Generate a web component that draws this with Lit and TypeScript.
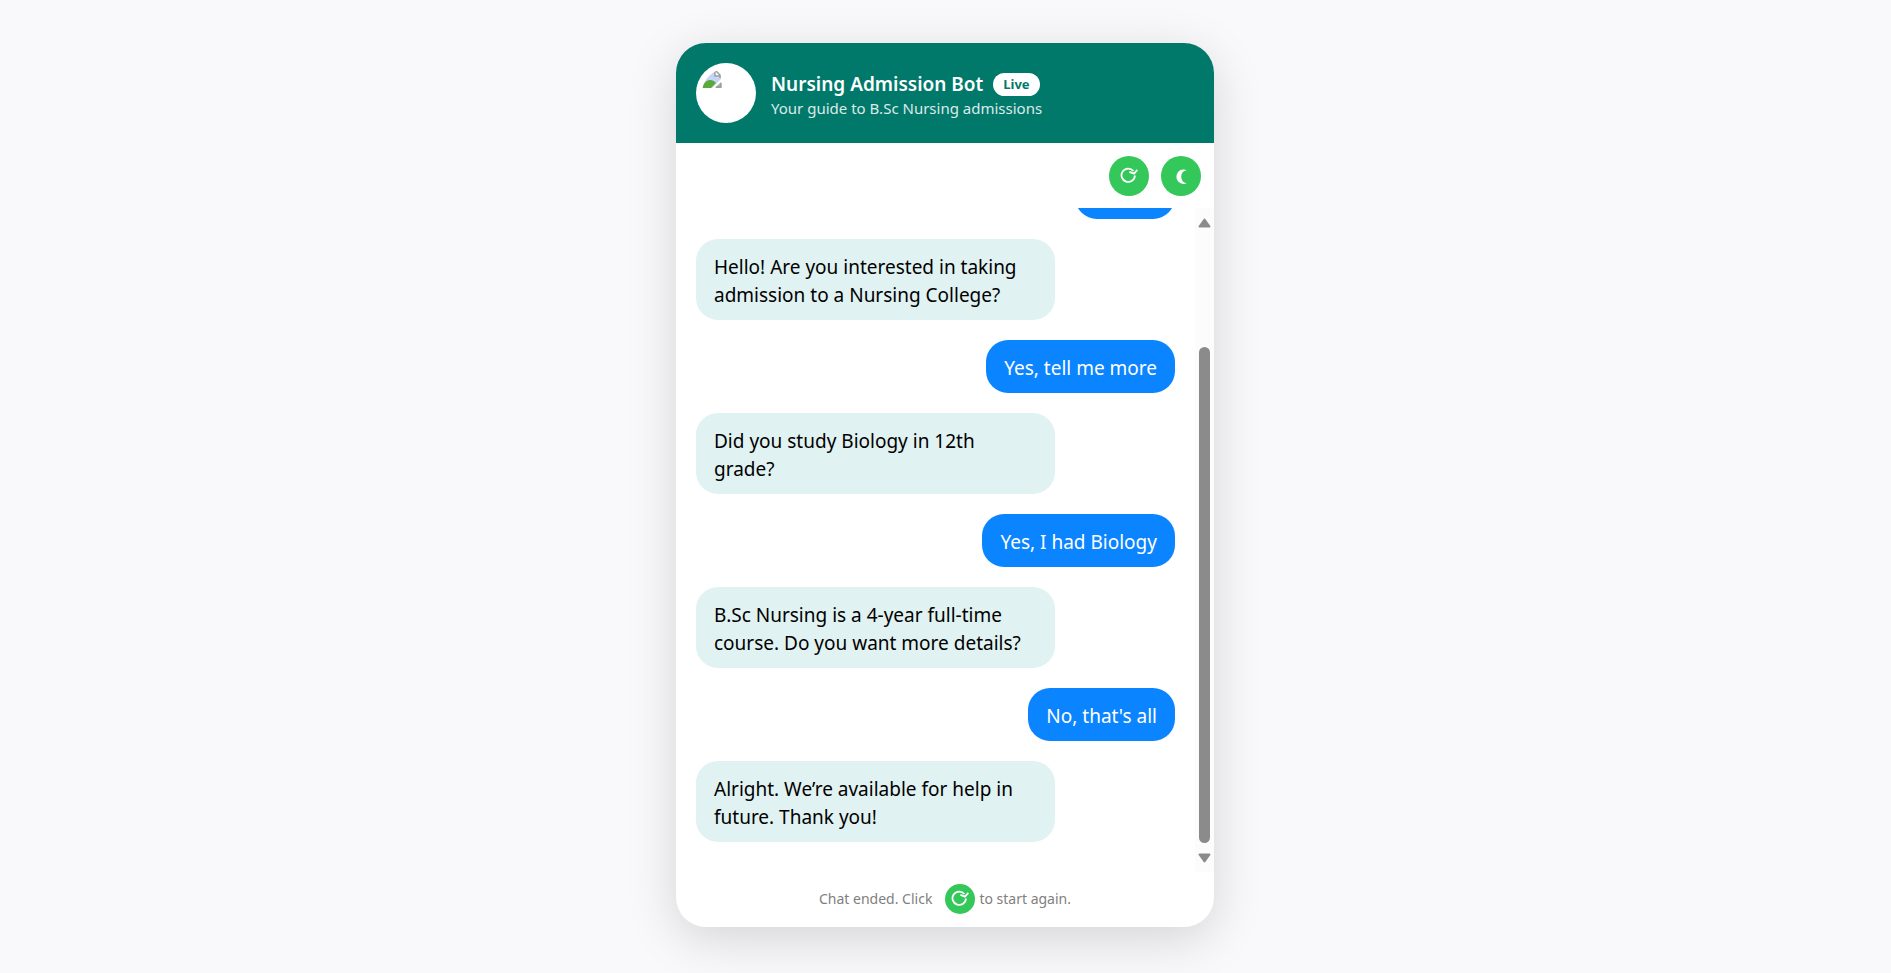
import { LitElement, html, css, svg } from "lit";
import { customElement, property, state } from "lit/decorators.js";

interface Message {
  from: "bot" | "user";
  text: string;
}

const MESSAGES: Message[] = [
  { from: "user", text: "Restart" },
  { from: "bot", text: "Hello! Are you interested in taking admission to a Nursing College?" },
  { from: "user", text: "Yes, tell me more" },
  { from: "bot", text: "Did you study Biology in 12th grade?" },
  { from: "user", text: "Yes, I had Biology" },
  { from: "bot", text: "B.Sc Nursing is a 4-year full-time course. Do you want more details?" },
  { from: "user", text: "No, that's all" },
  { from: "bot", text: "Alright. We\u2019re available for help in future. Thank you!" },
];

const refreshGlyph = svg`
  <path d="M13.4 4A6.7 6.7 0 1 0 14.9 8.4" fill="none" stroke="currentColor" stroke-width="1.8"/>
  <path d="M9.4 4.8 14 6.7 17.4 2.9" fill="none" stroke="currentColor" stroke-width="1.8"/>`;

const moonGlyph = svg`
  <path d="M14.7 3.2A7.2 7.2 0 1 0 14.7 16.2 6.6 6.6 0 0 1 14.7 3.2Z" fill="currentColor"/>`;

@customElement("round-button")
export class RoundButton extends LitElement {
  static styles = css`
    :host { display: inline-flex; }
    .button {
      display: grid;
      place-items: center;
      width: 40px;
      height: 40px;
      padding: 0;
      border: 0;
      border-radius: 50%;
      background: #34c759;
      color: #fff;
      cursor: pointer;
    }
    .small { width: 30px; height: 30px; }
    .icon { display: block; width: 18px; height: 18px; }
  `;

  @property() icon: "refresh" | "moon" = "refresh";
  @property() label = "";
  @property({ type: Boolean }) small = false;

  render() {
    return html`<button class="button ${this.small ? "small" : ""}" type="button" aria-label=${this.label}>
      <svg class="icon" viewBox="0 0 18 18" aria-hidden="true">
        ${this.icon === "moon" ? moonGlyph : refreshGlyph}
      </svg>
    </button>`;
  }
}

@customElement("app-root")
export class AppRoot extends LitElement {
  static styles = css`
    :host {
      display: flex;
      justify-content: center;
      box-sizing: border-box;
      height: 100vh;
      padding: 43px 21px 46px 20px;
      background: #f9f9fb;
      font-family: "Segoe UI", "Noto Sans", sans-serif;
      color: #000;
    }
    .card {
      display: flex;
      flex-direction: column;
      width: 100%;
      max-width: 538px;
      border-radius: 30px;
      overflow: hidden;
      background: #fff;
      box-shadow: 0 12px 50px rgba(0, 0, 0, 0.15);
    }
    .header {
      display: flex;
      align-items: center;
      gap: 15px;
      padding: 20px;
      background: #00796b;
      color: #fff;
    }
    .avatar {
      flex: none;
      box-sizing: border-box;
      width: 60px;
      height: 60px;
      padding: 6px;
      border-radius: 50%;
      background: #fff;
    }
    .broken { display: block; width: 20px; height: 20px; }
    .heading { padding-top: 6px; }
    .title-row { display: flex; align-items: center; gap: 10px; }
    .title { margin: 0; font-size: 19px; line-height: 24px; font-weight: 600; }
    .badge {
      padding: 0 10px;
      border-radius: 12px;
      background: #fff;
      color: #00796b;
      font-size: 13px;
      line-height: 23px;
      font-weight: 700;
    }
    .subtitle { margin: 0; font-size: 15px; line-height: 24px; opacity: 0.85; }
    .toolbar {
      display: flex;
      justify-content: flex-end;
      gap: 12px;
      padding: 13px 13px 12px;
    }
    .chat { display: flex; flex: 1; min-height: 0; }
    .viewport {
      display: flex;
      flex: 1;
      flex-direction: column-reverse;
      overflow-y: auto;
      scrollbar-width: none;
    }
    .messages {
      display: flex;
      flex-direction: column;
      gap: 20px;
      margin: 0;
      padding: 20px 20px 30px;
      list-style: none;
    }
    .message {
      box-sizing: border-box;
      max-width: 75%;
      padding: 14px 18px 11px;
      border-radius: 22px;
      font-size: 19px;
      line-height: 28px;
    }
    .bot { align-self: flex-start; background: #e0f2f1; }
    .user { align-self: flex-end; background: #0a84ff; color: #fff; }
    .rail {
      display: flex;
      flex-direction: column;
      align-items: center;
      gap: 10px;
      box-sizing: border-box;
      width: 19px;
      padding: 9px 3px 8px;
      background: #fcfcfc;
      color: #8b8b8b;
    }
    .arrow { flex: none; display: block; width: 13px; height: 11px; }
    .track { display: flex; flex: 1; flex-direction: column; justify-content: flex-end; }
    .thumb { width: 11px; height: 82%; border-radius: 6px; background: #8b8b8b; }
    .footer {
      display: flex;
      justify-content: center;
      align-items: center;
      padding: 12px 20px 13px;
      color: #808080;
      font-size: 14px;
      line-height: 20px;
    }
    .again { margin: 0 4px 0 13px; }
  `;

  @state() private messages = MESSAGES;

  render() {
    return html`
      <main class="card">
        <header class="header">
          <div class="avatar" role="img" aria-label="Bot">
            <svg class="broken" viewBox="0 0 20 20" aria-hidden="true">
              <clipPath id="round"><circle cx="24" cy="24" r="24"/></clipPath>
              <g clip-path="url(#round)">
                <path d="M1 1H13L19 7V10L10 19H1Z" fill="#c5d5f6"/>
                <path d="M0 19C3 10 10 9 14 14L9 19Z" fill="#58ab3a"/>
                <path d="M19 13V19H13Z" fill="#9fb79a"/>
                <path d="M13 2H14L18 6V8H13Z" fill="#fff"/>
                <path d="M10 2H14L18 6V9M13 2V7H18M19 14V18H14" fill="none" stroke="#999" stroke-width="1.4"/>
              </g>
            </svg>
          </div>
          <div class="heading">
            <div class="title-row">
              <h1 class="title">Nursing Admission Bot</h1>
              <span class="badge">Live</span>
            </div>
            <p class="subtitle">Your guide to B.Sc Nursing admissions</p>
          </div>
        </header>
        <div class="toolbar">
          <round-button icon="refresh" label="Restart chat"></round-button>
          <round-button icon="moon" label="Toggle dark mode"></round-button>
        </div>
        <section class="chat">
          <div class="viewport">
            <ul class="messages">
              ${this.messages.map((m) => html`<li class="message ${m.from}">${m.text}</li>`)}
            </ul>
          </div>
          <div class="rail" aria-hidden="true">
            <svg class="arrow" viewBox="0 0 13 11"><path d="M6.5 2.5 11.5 9.5H1.5Z" fill="currentColor" stroke="currentColor" stroke-width="2" stroke-linejoin="round"/></svg>
            <div class="track"><div class="thumb"></div></div>
            <svg class="arrow" viewBox="0 0 13 11"><path d="M6.5 8.5 11.5 1.5H1.5Z" fill="currentColor" stroke="currentColor" stroke-width="2" stroke-linejoin="round"/></svg>
          </div>
        </section>
        <footer class="footer">
          <span>Chat ended. Click</span>
          <round-button class="again" small icon="refresh" label="Restart chat"></round-button>
          <span>to start again.</span>
        </footer>
      </main>
    `;
  }
}
